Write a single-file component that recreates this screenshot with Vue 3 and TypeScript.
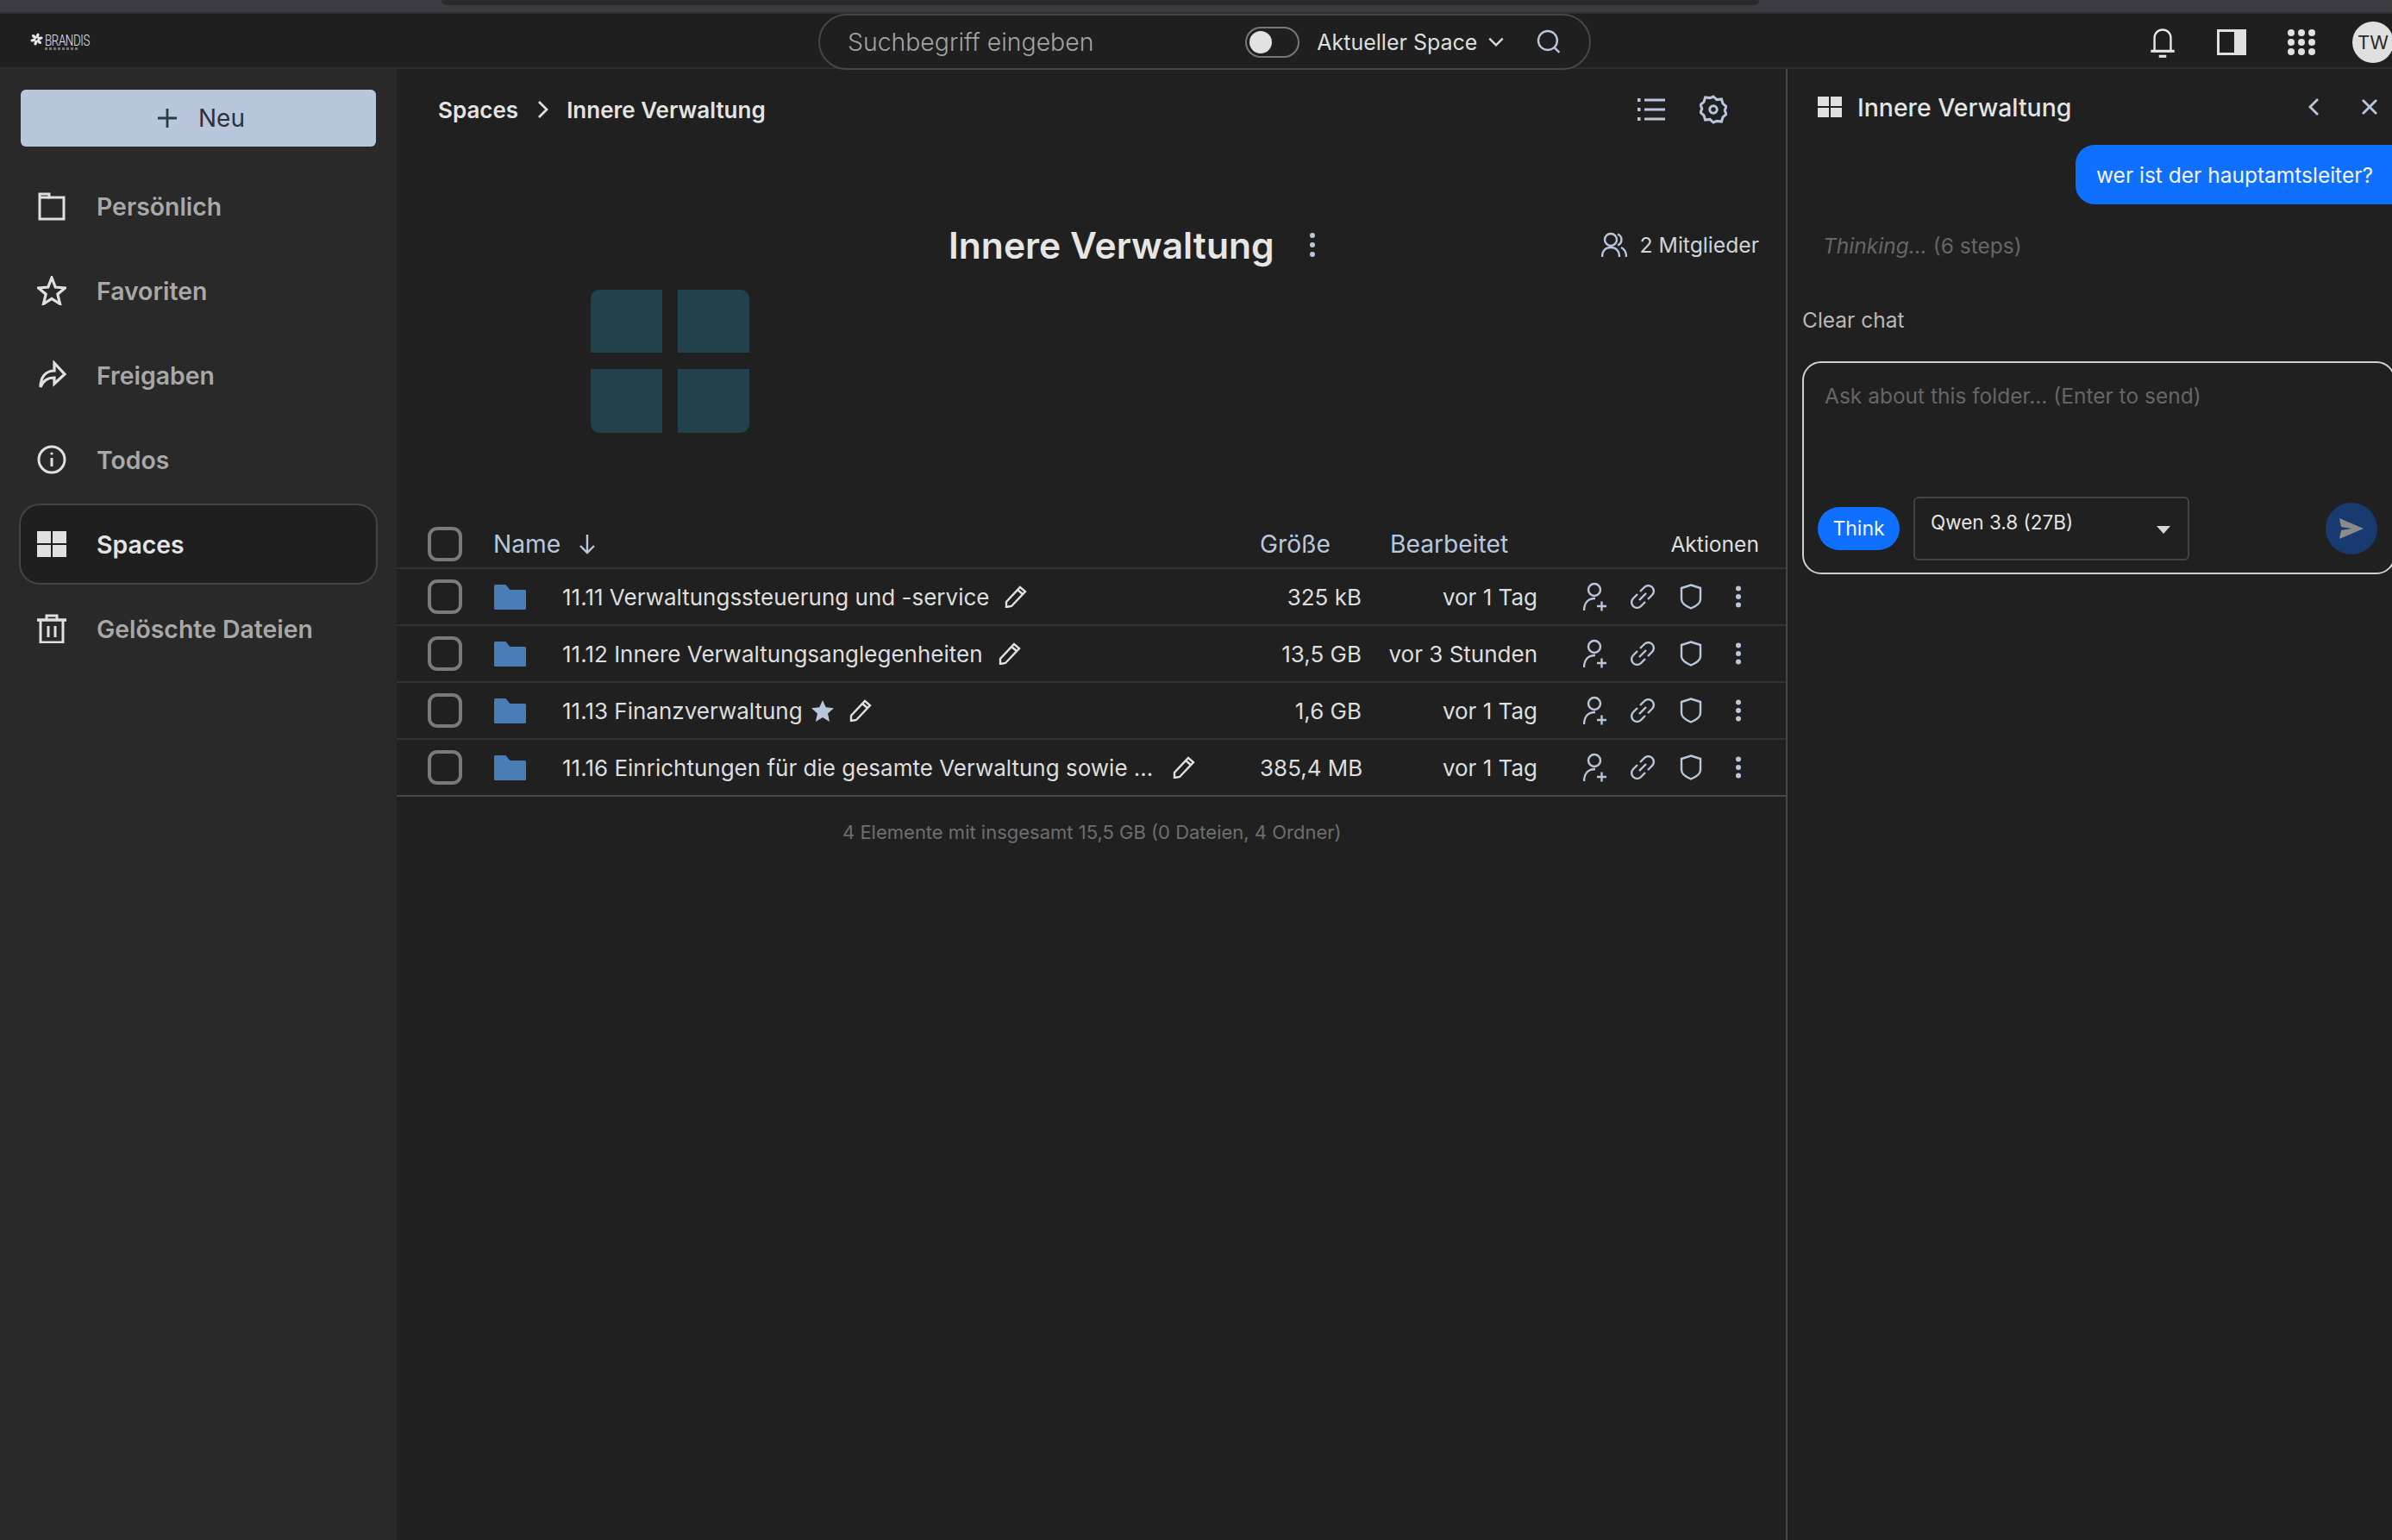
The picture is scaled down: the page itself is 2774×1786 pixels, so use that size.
<script setup lang="ts">
const navItems = [
  { label: "Persönlich", icon: "folder" },
  { label: "Favoriten", icon: "star" },
  { label: "Freigaben", icon: "share" },
  { label: "Todos", icon: "info" },
  { label: "Spaces", icon: "grid", active: true },
  { label: "Gelöschte Dateien", icon: "trash" },
];

const rows = [
  { name: "11.11 Verwaltungssteuerung und -service", size: "325 kB", edited: "vor 1 Tag" },
  { name: "11.12 Innere Verwaltungsanglegenheiten", size: "13,5 GB", edited: "vor 3 Stunden" },
  { name: "11.13 Finanzverwaltung", size: "1,6 GB", edited: "vor 1 Tag", favorite: true },
  { name: "11.16 Einrichtungen für die gesamte Verwaltung sowie ...", size: "385,4 MB", edited: "vor 1 Tag" },
];
</script>

<template>
  <div class="app">
    <div class="window-strip"><div class="window-notch"></div></div>

    <header class="topbar">
      <div class="logo">
        <svg class="logo-mark" viewBox="0 0 20 20" fill="#e8e8e8">
          <g v-for="a in [0, 60, 120, 180, 240, 300]" :key="a" :transform="`rotate(${a + 15} 10 10)`">
            <ellipse cx="10" cy="4.500" rx="2.300" ry="4.200" />
          </g>
        </svg>
        <div class="logo-words">
          <span class="logo-name">BRANDIS</span>
          <span class="logo-sub"></span>
        </div>
      </div>

      <div class="search">
        <span class="search-text">Suchbegriff eingeben</span>
        <span class="toggle"><span class="knob"></span></span>
        <span class="scope">Aktueller Space</span>
        <svg class="scope-chevron" viewBox="0 0 16 10" fill="none" stroke="#d8d8d8" stroke-width="2.200"><path d="M1 1.500l7 7 7-7" /></svg>
        <svg class="search-icon" viewBox="0 0 30 30" fill="none" stroke="#b9c7dc" stroke-width="2.400"><circle cx="14" cy="13" r="11" /><path d="M21.500 21l6 6" /></svg>
      </div>

      <div class="top-actions">
        <svg class="bell" viewBox="0 0 36 42" fill="none" stroke="#e8e8e8" stroke-width="2.800">
          <path d="M7 32V15a11 11 0 0 1 22 0v17" /><path d="M2 33h32" stroke-width="3.600" /><path d="M13 40h10" stroke-width="3.600" />
        </svg>
        <svg class="panel-toggle" viewBox="0 0 34 30">
          <rect x="1.500" y="1.500" width="31" height="27" fill="none" stroke="#e0e0e0" stroke-width="3" />
          <rect x="20" y="1.500" width="13" height="27" fill="#e0e0e0" />
        </svg>
        <svg class="apps" viewBox="0 0 34 32" fill="#e0e0e0">
          <template v-for="y in [5, 16, 27]" :key="y">
            <circle v-for="x in [5, 17, 29]" :key="x" :cx="x" :cy="y" r="4" />
          </template>
        </svg>
        <span class="avatar">TW</span>
      </div>
    </header>

    <div class="body">
      <aside class="sidebar">
        <button class="new-btn" type="button">
          <svg viewBox="0 0 24 24" fill="none" stroke="#2c3a44" stroke-width="2.800"><path d="M12 1v22M1 12h22" /></svg>
          <span>Neu</span>
        </button>

        <nav class="nav">
          <a v-for="item in navItems" :key="item.label" :class="['nav-item', { active: item.active }]">
            <svg class="nav-icon" viewBox="0 0 34 34" fill="none" stroke="#e0e0e0" stroke-width="3">
              <template v-if="item.icon === 'folder'">
                <path d="M3 3h11v4h17v25H3z" /><path d="M3 7h11" />
              </template>
              <path v-else-if="item.icon === 'star'" d="M17 2l4.200 11 11.300.9-8.700 7.300 2.800 11.300L17 26.300 7.400 32.500l2.800-11.300-8.700-7.300 11.300-.9z" stroke-width="3.200" />
              <path v-else-if="item.icon === 'share'" d="M20 3l12 13-12 11v-7C12 20 7 23 4 31c0-12 6-19 16-19z" stroke-width="3.200" />
              <template v-else-if="item.icon === 'info'">
                <circle cx="17" cy="17" r="15" /><path d="M17 15v10" /><circle cx="17" cy="10" r="1.600" fill="#e0e0e0" stroke="none" />
              </template>
              <g v-else-if="item.icon === 'grid'" fill="#e0e0e0" stroke="none">
                <rect x="0" y="2" width="16" height="14" /><rect x="18" y="2" width="16" height="14" />
                <rect x="0" y="18" width="16" height="14" /><rect x="18" y="18" width="16" height="14" />
              </g>
              <template v-else>
                <path d="M0 7h34" stroke-width="3.400" /><path d="M11 6V2h12v4" /><path d="M4 8v25h26V8" /><path d="M13 14v13M21 14v13" />
              </template>
            </svg>
            <span>{{ item.label }}</span>
          </a>
        </nav>
      </aside>

      <main class="main">
        <div class="crumbs">
          <span>Spaces</span>
          <svg class="crumb-sep" viewBox="0 0 14 22" fill="none" stroke="#e0e0e0" stroke-width="2.800"><path d="M3 2l9 9-9 9" /></svg>
          <span>Innere Verwaltung</span>
          <div class="crumb-tools">
            <svg class="tool-list" viewBox="0 0 32 28" fill="none" stroke="#b9c7dc" stroke-width="3">
              <path d="M8 3h24M8 14h24M8 25h24" /><path d="M0 3h3.500M0 14h3.500M0 25h3.500" stroke-width="4" />
            </svg>
            <svg class="tool-gear" viewBox="0 0 32 34" fill="none" stroke="#b9c7dc" stroke-width="3">
              <path d="M16 2l4 3.600 5.400-.7 1.600 5.200 4 3.400-1.800 4.500 1.800 4.500-4 3.400-1.600 5.200-5.400-.7L16 32l-4-3.600-5.400.7L5 23.900 1 20.500l1.800-4.500L1 11.500l4-3.400 1.600-5.200 5.400.7z" />
              <circle cx="16" cy="17" r="4.200" />
            </svg>
          </div>
        </div>

        <div class="title-row">
          <h1>Innere Verwaltung</h1>
          <svg class="title-menu" viewBox="0 0 8 30" fill="#b9c7dc"><circle cx="4" cy="4" r="3" /><circle cx="4" cy="15" r="3" /><circle cx="4" cy="26" r="3" /></svg>
          <div class="members">
            <svg viewBox="0 0 30 30" fill="none" stroke="#b9c7dc" stroke-width="2.400">
              <circle cx="11" cy="9" r="7" /><path d="M1 29c0-7 4-11 10-11s10 4 10 11" /><path d="M19 2.500a7 7 0 0 1 0 13M23 18c4 2 6 6 6 11" />
            </svg>
            <span>2 Mitglieder</span>
          </div>
        </div>

        <div class="space-tile">
          <span></span><span></span><span></span><span></span>
        </div>

        <section class="table">
          <div class="row head">
            <div class="name-cell">
              <span class="check"></span>
              <span class="head-name">Name</span>
              <svg class="sort" viewBox="0 0 20 24" fill="none" stroke="#b9c7dc" stroke-width="2.400"><path d="M10 1v21M2 14l8 8 8-8" /></svg>
            </div>
            <span class="head-size">Größe</span>
            <span class="head-date">Bearbeitet</span>
            <span class="head-actions">Aktionen</span>
          </div>

          <div v-for="row in rows" :key="row.name" class="row">
            <div class="name-cell">
              <span class="check"></span>
              <svg class="folder" viewBox="0 0 37 29" fill="#4a7cb5"><path d="M0 1.500A1.500 1.500 0 0 1 1.500 0h12l5 6h17A1.500 1.500 0 0 1 37 7.500v20a1.500 1.500 0 0 1-1.500 1.500h-34A1.500 1.500 0 0 1 0 27.500z" /></svg>
              <span class="file-name">{{ row.name }}</span>
              <svg v-if="row.favorite" class="fav" viewBox="0 0 28 28" fill="#b9c7dc"><path d="M14 1l4 9 10 1-7.500 6.700L22.700 28 14 22.500 5.300 28l2.200-10.300L0 11l10-1z" /></svg>
              <svg class="pencil" viewBox="0 0 26 26" fill="none" stroke="#e0e0e0" stroke-width="2.400">
                <path d="M18 2l6 5L8 24l-6 1 0-6z" /><path d="M15 5l6 5" />
              </svg>
            </div>
            <span class="size">{{ row.size }}</span>
            <span class="edited">{{ row.edited }}</span>
            <div class="actions">
              <svg viewBox="0 0 28 34" fill="none" stroke="#b9c7dc" stroke-width="2.400">
                <circle cx="13" cy="9" r="7" /><path d="M1 33c0-9 5-14 13-14" /><path d="M16 28h11M21.500 22.500v11" />
              </svg>
              <svg viewBox="0 0 28 28" fill="none" stroke="#b9c7dc" stroke-width="2.400">
                <path d="M11 8l5-5a6 6 0 0 1 9 9l-5 5" /><path d="M17 20l-5 5a6 6 0 0 1-9-9l5-5" /><path d="M18 10l-8 8" />
              </svg>
              <svg viewBox="0 0 26 30" fill="none" stroke="#b9c7dc" stroke-width="2.400">
                <path d="M13 1.500l11 3.500v13c0 4-5 8-11 10.500C7 26 2 22 2 18V5z" />
              </svg>
              <svg viewBox="0 0 8 26" fill="#b9c7dc"><circle cx="4" cy="3.500" r="3" /><circle cx="4" cy="13" r="3" /><circle cx="4" cy="22.500" r="3" /></svg>
            </div>
          </div>
        </section>

        <p class="summary">4 Elemente mit insgesamt 15,5 GB (0 Dateien, 4 Ordner)</p>
      </main>

      <aside class="chat">
        <div class="chat-head">
          <svg class="chat-grid" viewBox="0 0 28 24" fill="#e0e0e0">
            <rect x="0" y="0" width="13" height="11" /><rect x="15" y="0" width="13" height="11" />
            <rect x="0" y="13" width="13" height="11" /><rect x="15" y="13" width="13" height="11" />
          </svg>
          <span class="chat-title">Innere Verwaltung</span>
          <svg class="chat-back" viewBox="0 0 14 22" fill="none" stroke="#b9c7dc" stroke-width="2.800"><path d="M12 2l-9 9 9 9" /></svg>
          <svg class="chat-close" viewBox="0 0 20 20" fill="none" stroke="#b9c7dc" stroke-width="2.800"><path d="M2 2l16 16M18 2L2 18" /></svg>
        </div>

        <div class="bubble">wer ist der hauptamtsleiter?</div>
        <p class="thinking"><em>Thinking...</em> (6 steps)</p>
        <p class="clear">Clear chat</p>

        <div class="composer">
          <div class="placeholder">Ask about this folder... (Enter to send)</div>
          <div class="composer-bar">
            <span class="think">Think</span>
            <div class="model">
              <span>Qwen 3.8 (27B)</span>
              <i class="caret"></i>
            </div>
            <span class="send">
              <svg viewBox="0 0 28 24" fill="#8b8b8b"><path d="M0 0l28 12L0 24l2-10 12-2-12-2z" /></svg>
            </span>
          </div>
        </div>
      </aside>
    </div>
  </div>
</template>

<style>
html,
body {
  margin: 0;
  background: #202020;
}
</style>

<style scoped>
.app {
  width: 2774px;
  height: 1786px;
  overflow: hidden;
  display: flex;
  flex-direction: column;
  background: #202020;
  color: #e4e4e4;
  font-family: Inter, "Liberation Sans", sans-serif;
  font-size: 28px;
}

.window-strip {
  height: 14px;
  background: #3b3b41;
  border-bottom: 2px solid #2d2d2d;
}

.window-notch {
  width: 1528px;
  height: 6px;
  margin-left: 512px;
  background: #2a2a2c;
  border-radius: 0 0 10px 10px;
}

.topbar {
  height: 64px;
  box-sizing: border-box;
  flex: none;
  display: grid;
  grid-template-columns: 949px 896px 1fr;
  align-items: center;
  background: #1f1f1f;
  border-bottom: 2px solid #2d2d2d;
}

.logo {
  display: flex;
  align-items: center;
  gap: 2px;
  padding-left: 35px;
}

.logo-mark {
  width: 15px;
  height: 15px;
  margin-top: -6px;
}

.logo-words {
  display: flex;
  flex-direction: column;
  gap: 1px;
}

.logo-name {
  font-family: Roboto, sans-serif;
  font-size: 18px;
  line-height: 15px;
  font-weight: 300;
  letter-spacing: -0.5px;
  color: #e8e8e8;
  transform: scaleX(0.74);
  transform-origin: left;
}

.logo-sub {
  width: 40px;
  height: 3px;
  background: repeating-linear-gradient(90deg, #777 0 3px, transparent 3px 5px);
}

.search {
  height: 65px;
  box-sizing: border-box;
  display: flex;
  align-items: center;
  padding: 0 32px;
  border: 2px solid #474747;
  border-radius: 33px;
  background: #1f1f1f;
}

.search-text {
  width: 463px;
  color: #a3a3a3;
  font-size: 28.400px;
  font-weight: 300;
}

.toggle {
  width: 64px;
  height: 36px;
  box-sizing: border-box;
  margin-right: 20px;
  padding: 3px;
  border: 2px solid #777;
  border-radius: 18px;
}

.knob {
  display: block;
  width: 26px;
  height: 26px;
  border-radius: 50%;
  background: #e2e2e2;
}

.scope {
  width: 183px;
  font-size: 25px;
  color: #dedede;
  white-space: nowrap;
}

.scope-chevron {
  width: 18px;
  height: 11px;
  margin-left: 16px;
}

.search-icon {
  width: 30px;
  height: 30px;
  margin-left: 37px;
}

.top-actions {
  display: flex;
  align-items: center;
  padding-left: 646px;
}

.bell {
  width: 34px;
  height: 36px;
}

.panel-toggle {
  width: 34px;
  height: 30px;
  margin-left: 46px;
}

.apps {
  width: 34px;
  height: 32px;
  margin-left: 47px;
}

.avatar {
  width: 48px;
  height: 48px;
  flex: none;
  display: grid;
  place-items: center;
  margin-left: 42px;
  border-radius: 50%;
  background: #e0e0e0;
  color: #2a2a2a;
  font-size: 22px;
}

.body {
  flex: 1;
  display: flex;
  min-height: 0;
}

.sidebar {
  width: 460px;
  flex: none;
  box-sizing: border-box;
  padding: 24px 24px 0;
  background: #292929;
}

.new-btn {
  width: 412px;
  height: 66px;
  display: flex;
  align-items: center;
  justify-content: center;
  gap: 24px;
  padding: 0 0 0 6px;
  border: 0;
  border-radius: 6px;
  background: #b9c7dc;
  color: #2c3338;
  font: inherit;
}

.new-btn svg {
  width: 24px;
  height: 24px;
}

.nav {
  margin-top: 22px;
  display: flex;
  flex-direction: column;
  gap: 4px;
}

.nav-item {
  height: 94px;
  box-sizing: border-box;
  display: flex;
  align-items: center;
  gap: 35px;
  margin: 0 -2px;
  padding-left: 19px;
  border: 2px solid transparent;
  border-radius: 24px;
  color: #a8a8a8;
  font-size: 28.400px;
  font-weight: 600;
}

.nav-item.active {
  background: #1f1f1f;
  border-color: #444;
  color: #e4e4e4;
}

.nav-icon {
  width: 34px;
  height: 34px;
  flex: none;
}

.main {
  flex: 1;
  min-width: 0;
  border-right: 2px solid #444;
}

.crumbs {
  height: 94px;
  display: flex;
  align-items: center;
  padding: 0 68px 0 48px;
  font-size: 26px;
  font-weight: 600;
  color: #e4e4e4;
}

.crumb-sep {
  width: 14px;
  height: 22px;
  margin: 0 21px;
}

.crumb-tools {
  margin-left: auto;
  display: flex;
  align-items: center;
  gap: 40px;
}

.tool-list {
  width: 32px;
  height: 28px;
}

.tool-gear {
  width: 32px;
  height: 34px;
}

.title-row {
  height: 60px;
  margin-top: 80px;
  display: flex;
  align-items: center;
  padding: 0 31px 0 640px;
}

h1 {
  margin: 0;
  font-size: 42.600px;
  font-weight: 600;
  color: #e6e6e6;
  white-space: nowrap;
}

.title-menu {
  width: 8px;
  height: 30px;
  margin-left: 40px;
}

.members {
  margin-left: auto;
  display: flex;
  align-items: center;
  gap: 15px;
  font-size: 24.700px;
  color: #cfd3da;
}

.members svg {
  width: 30px;
  height: 30px;
}

.space-tile {
  width: 184px;
  height: 166px;
  margin: 22px 0 0 225px;
  display: grid;
  grid-template-columns: 83px 83px;
  grid-template-rows: 73px 74px;
  gap: 19px 18px;
}

.space-tile span {
  background: #21414d;
}

.space-tile span:nth-child(1) {
  border-top-left-radius: 10px;
}

.space-tile span:nth-child(2) {
  border-top-right-radius: 10px;
}

.space-tile span:nth-child(3) {
  border-bottom-left-radius: 10px;
}

.space-tile span:nth-child(4) {
  border-bottom-right-radius: 10px;
}

.table {
  margin-top: 100px;
}

.row {
  height: 66px;
  box-sizing: border-box;
  display: grid;
  grid-template-columns: 1001px 118px 204px 1fr;
  align-items: center;
  border-bottom: 2px solid #333;
  font-size: 26px;
  color: #dedede;
}

.row:last-child {
  border-bottom-color: #464646;
}

.row.head {
  height: 58px;
  padding-top: 2px;
}

.name-cell {
  min-width: 0;
  display: flex;
  align-items: center;
  padding-left: 36px;
}

.check {
  width: 40px;
  height: 40px;
  flex: none;
  box-sizing: border-box;
  margin-right: 36px;
  border: 4px solid #7a7a7a;
  border-radius: 11px;
}

.head-name,
.head-size,
.head-date {
  color: #b9c7dc;
  font-size: 28.200px;
}

.sort {
  width: 20px;
  height: 24px;
  margin-left: 21px;
}

.head-date {
  padding-left: 33px;
}

.head-actions {
  padding-right: 31px;
  text-align: right;
  font-size: 24.600px;
  color: #dedede;
}

.folder {
  width: 37px;
  height: 29px;
  flex: none;
  margin: 0 42px 0 1px;
}

.file-name {
  white-space: nowrap;
}

.fav {
  width: 26px;
  height: 26px;
  margin-left: 10px;
}

.pencil {
  width: 26px;
  height: 26px;
  margin-left: 18px;
}

.row:last-child .pencil {
  margin-left: 23px;
}

.size,
.edited {
  text-align: right;
  white-space: nowrap;
}

.actions {
  display: grid;
  grid-template-columns: 54px 56px 56px 54px;
  justify-items: center;
  align-items: center;
  padding-left: 40px;
}

.actions svg:nth-child(1) {
  width: 28px;
  height: 34px;
}

.actions svg:nth-child(2) {
  width: 28px;
  height: 28px;
}

.actions svg:nth-child(3) {
  width: 26px;
  height: 30px;
}

.actions svg:nth-child(4) {
  width: 8px;
  height: 26px;
}

.summary {
  margin: 26px 0 0;
  padding-left: 517px;
  font-size: 22px;
  line-height: 30px;
  color: #6e6e6e;
}

.chat {
  width: 701px;
  flex: none;
  overflow: hidden;
  font-size: 24.500px;
}

.chat-head {
  height: 88px;
  display: flex;
  align-items: center;
  padding: 0 16px 0 35px;
}

.chat-grid {
  width: 28px;
  height: 24px;
}

.chat-title {
  margin-left: 18px;
  font-size: 28.400px;
  font-weight: 500;
}

.chat-back {
  width: 14px;
  height: 22px;
  margin-left: auto;
  margin-right: 48px;
}

.chat-close {
  width: 20px;
  height: 20px;
}

.bubble {
  width: 367px;
  height: 69px;
  box-sizing: border-box;
  margin-left: auto;
  display: flex;
  align-items: center;
  padding-left: 24px;
  border-radius: 22px 0 0 22px;
  background: #0f6fff;
  color: #f2f6ff;
  white-space: nowrap;
}

.thinking {
  margin: 32px 0 0 41px;
  line-height: 32px;
  color: #666;
}

.clear {
  margin: 54px 0 0 17px;
  line-height: 32px;
  color: #b8b8b8;
}

.composer {
  width: 688px;
  height: 247px;
  box-sizing: border-box;
  margin: 32px 0 0 17px;
  padding: 23px 19px 0 16px;
  border: 2px solid #d0d0d0;
  border-radius: 22px;
}

.placeholder {
  padding-left: 8px;
  line-height: 30px;
  color: #666;
}

.composer-bar {
  margin-top: 102px;
  display: flex;
  align-items: center;
  gap: 16px;
}

.think {
  width: 95px;
  height: 50px;
  display: grid;
  place-items: center;
  border-radius: 25px;
  background: #0f6fff;
  color: #f2f6ff;
  font-size: 23px;
}

.model {
  width: 320px;
  height: 74px;
  box-sizing: border-box;
  display: flex;
  justify-content: space-between;
  padding: 14px 20px 0 18px;
  border: 2px solid #444;
  border-radius: 6px;
  font-size: 22.500px;
  color: #e4e4e4;
}

.caret {
  margin-top: 18px;
  width: 0;
  height: 0;
  border: 8px solid transparent;
  border-top: 9px solid #d8d8d8;
  border-bottom: 0;
}

.send {
  width: 60px;
  height: 60px;
  margin-left: auto;
  display: grid;
  place-items: center;
  border-radius: 50%;
  background: #183a70;
}

.send svg {
  width: 28px;
  height: 24px;
}
</style>
